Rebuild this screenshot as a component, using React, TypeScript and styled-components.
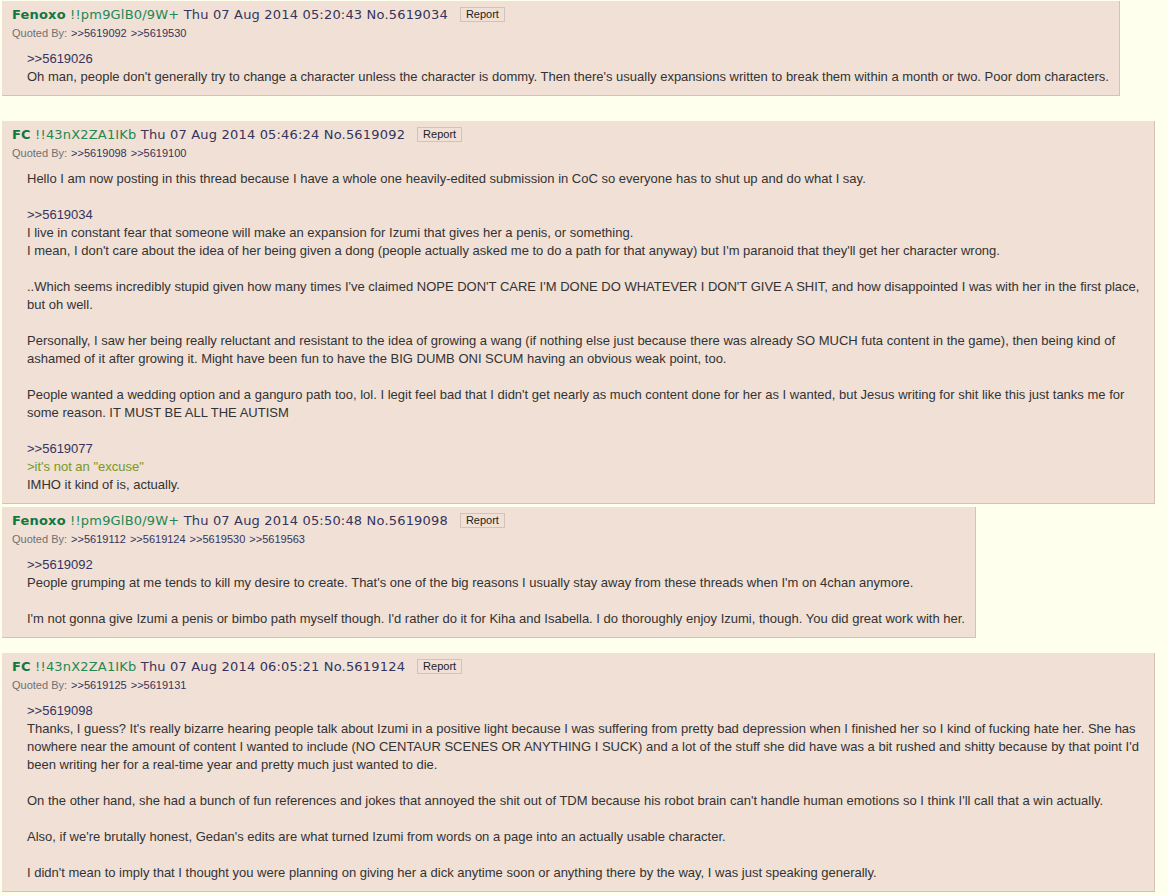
import React from 'react';
import styled, { createGlobalStyle } from 'styled-components';

const Global = createGlobalStyle`
  html, body { margin: 0; padding: 0; background: #FFFFEE; }
  body {
    font-family: "Liberation Sans", Arial, sans-serif;
    font-size: 13px;
    color: #333;
  }
`;

const Thread = styled.main`
  display: flex;
  flex-direction: column;
  align-items: flex-start;
  padding: 0 13px 0 2px;
`;

const Post = styled.article<{ $top: number }>`
  box-sizing: border-box;
  max-width: 100%;
  margin-top: ${(p) => p.$top}px;
  padding: 5px 10px 0 10px;
  background: #F0E0D6;
  border-right: 1px solid #D9BFB7;
  border-bottom: 1px solid #D9BFB7;
`;

const Info = styled.div`
  font-family: "DejaVu Sans", Verdana, sans-serif;
  font-size: 13px;
  line-height: 18px;
  letter-spacing: 0.18px;
  color: #34345C;
  white-space: nowrap;
`;

const Name = styled.span`
  font-weight: bold;
  color: #117743;
`;

const Trip = styled.span`
  color: #228854;
`;

const ReportButton = styled.button`
  box-sizing: border-box;
  height: 15px;
  margin-left: 12px;
  padding: 0 5px;
  font-family: "Liberation Sans", Arial, sans-serif;
  font-size: 11px;
  line-height: 13px;
  letter-spacing: 0;
  color: #222;
  background: #F0E0D6;
  border: 1px solid #D2C2BA;
  border-radius: 0;
  vertical-align: 1px;
`;

const Backlinks = styled.div`
  font-size: 11px;
  line-height: 18px;
  color: #707070;
`;

const BackLink = styled.a`
  color: #34345C;
  text-decoration: none;
  margin-left: 4px;
`;

const Body = styled.blockquote`
  margin: 8px 0 9px 15px;
  font-size: 13px;
  line-height: 18px;
  color: #333;
`;

const Line = styled.div`
  min-height: 18px;
`;

const QuoteLink = styled.a`
  color: #34345C;
  text-decoration: none;
`;

const GreenText = styled.span`
  color: #789922;
`;

type PostData = {
  top: number;
  name: string;
  trip: string;
  date: string;
  no: string;
  quotedBy: string[];
  lines: string[];
};

const posts: PostData[] = [
  {
    top: 1,
    name: 'Fenoxo',
    trip: '!!pm9GlB0/9W+',
    date: 'Thu 07 Aug 2014 05:20:43',
    no: '5619034',
    quotedBy: ['5619092', '5619530'],
    lines: [
      '>>5619026',
      "Oh man, people don't generally try to change a character unless the character is dommy. Then there's usually expansions written to break them within a month or two. Poor dom characters.",
    ],
  },
  {
    top: 25,
    name: 'FC',
    trip: '!!43nX2ZA1IKb',
    date: 'Thu 07 Aug 2014 05:46:24',
    no: '5619092',
    quotedBy: ['5619098', '5619100'],
    lines: [
      'Hello I am now posting in this thread because I have a whole one heavily-edited submission in CoC so everyone has to shut up and do what I say.',
      '',
      '>>5619034',
      'I live in constant fear that someone will make an expansion for Izumi that gives her a penis, or something.',
      "I mean, I don't care about the idea of her being given a dong (people actually asked me to do a path for that anyway) but I'm paranoid that they'll get her character wrong.",
      '',
      "..Which seems incredibly stupid given how many times I've claimed NOPE DON'T CARE I'M DONE DO WHATEVER I DON'T GIVE A SHIT, and how disappointed I was with her in the first place, but oh well.",
      '',
      'Personally, I saw her being really reluctant and resistant to the idea of growing a wang (if nothing else just because there was already SO MUCH futa content in the game), then being kind of ashamed of it after growing it. Might have been fun to have the BIG DUMB ONI SCUM having an obvious weak point, too.',
      '',
      "People wanted a wedding option and a ganguro path too, lol. I legit feel bad that I didn't get nearly as much content done for her as I wanted, but Jesus writing for shit like this just tanks me for some reason. IT MUST BE ALL THE AUTISM",
      '',
      '>>5619077',
      '>it\'s not an "excuse"',
      'IMHO it kind of is, actually.',
    ],
  },
  {
    top: 3,
    name: 'Fenoxo',
    trip: '!!pm9GlB0/9W+',
    date: 'Thu 07 Aug 2014 05:50:48',
    no: '5619098',
    quotedBy: ['5619112', '5619124', '5619530', '5619563'],
    lines: [
      '>>5619092',
      "People grumping at me tends to kill my desire to create. That's one of the big reasons I usually stay away from these threads when I'm on 4chan anymore.",
      '',
      "I'm not gonna give Izumi a penis or bimbo path myself though. I'd rather do it for Kiha and Isabella. I do thoroughly enjoy Izumi, though. You did great work with her.",
    ],
  },
  {
    top: 15,
    name: 'FC',
    trip: '!!43nX2ZA1IKb',
    date: 'Thu 07 Aug 2014 06:05:21',
    no: '5619124',
    quotedBy: ['5619125', '5619131'],
    lines: [
      '>>5619098',
      "Thanks, I guess? It's really bizarre hearing people talk about Izumi in a positive light because I was suffering from pretty bad depression when I finished her so I kind of fucking hate her. She has nowhere near the amount of content I wanted to include (NO CENTAUR SCENES OR ANYTHING I SUCK) and a lot of the stuff she did have was a bit rushed and shitty because by that point I'd been writing her for a real-time year and pretty much just wanted to die.",
      '',
      "On the other hand, she had a bunch of fun references and jokes that annoyed the shit out of TDM because his robot brain can't handle human emotions so I think I'll call that a win actually.",
      '',
      "Also, if we're brutally honest, Gedan's edits are what turned Izumi from words on a page into an actually usable character.",
      '',
      "I didn't mean to imply that I thought you were planning on giving her a dick anytime soon or anything there by the way, I was just speaking generally.",
    ],
  },
];

function renderLine(text: string, i: number) {
  if (/^>>\d+$/.test(text)) {
    return (
      <Line key={i}>
        <QuoteLink href={`#p${text.slice(2)}`}>{text}</QuoteLink>
      </Line>
    );
  }
  if (text.startsWith('>')) {
    return (
      <Line key={i}>
        <GreenText>{text}</GreenText>
      </Line>
    );
  }
  return <Line key={i}>{text}</Line>;
}

export default function App() {
  return (
    <>
      <Global />
      <Thread>
        {posts.map((p) => (
          <Post key={p.no} $top={p.top} id={`p${p.no}`}>
            <Info>
              <Name>{p.name}</Name> <Trip>{p.trip}</Trip> {p.date} No.{p.no}
              <ReportButton type="button">Report</ReportButton>
            </Info>
            <Backlinks>
              Quoted By:
              {p.quotedBy.map((q) => (
                <BackLink key={q} href={`#p${q}`}>
                  &gt;&gt;{q}
                </BackLink>
              ))}
            </Backlinks>
            <Body>{p.lines.map(renderLine)}</Body>
          </Post>
        ))}
      </Thread>
    </>
  );
}
